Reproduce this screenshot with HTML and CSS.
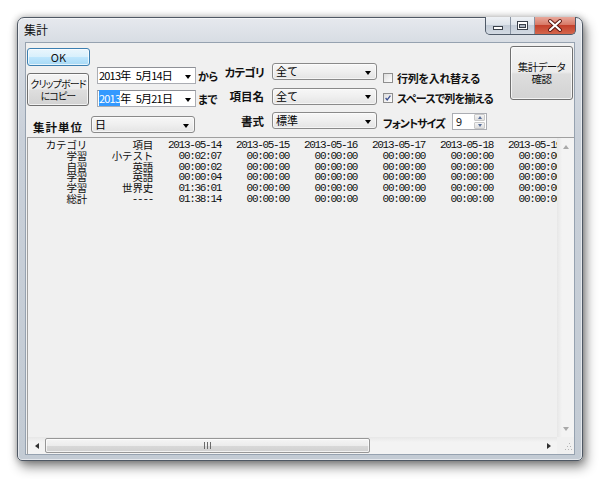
FILE: index.html
```html
<!DOCTYPE html>
<html lang="ja">
<head>
<meta charset="utf-8">
<title>集計</title>
<link rel="stylesheet" href="styles.css">
</head>
<body>
<div class="window">
  <div class="titlebar">
    <span class="title">集計</span>
    <div class="caption-btns">
      <div class="cbtn min"><svg width="24" height="17" viewBox="0 0 24 17"><rect x="7.5" y="9.5" width="9" height="3" fill="#fff" stroke="#3a414b"/></svg></div>
      <div class="cbtn max"><svg width="23" height="17" viewBox="0 0 23 17"><rect x="6.5" y="4.5" width="10" height="8" fill="#fff" stroke="#3a414b"/><rect x="8.5" y="7.5" width="6" height="3" fill="#aab3bf" stroke="#3a414b"/></svg></div>
      <div class="cbtn close"><svg width="40" height="17" viewBox="0 0 40 17"><path d="M15 4 L25 13 M25 4 L15 13" stroke="#5a1a14" stroke-width="4" stroke-linecap="round"/><path d="M15 4 L25 13 M25 4 L15 13" stroke="#fff" stroke-width="2" stroke-linecap="round"/></svg></div>
    </div>
  </div>
  <div class="client">
    <div class="controls">
      <div class="grp-left">
        <div class="grp-left-top">
          <div class="btncol">
            <div class="btn ok">OK</div>
            <div class="btn clip">クリップボード<br>にコピー</div>
          </div>
          <div class="datecol">
            <div class="daterow">
              <div class="dtp"><span class="dtp-text">2013年  5月14日</span><span class="arrow"></span></div>
              <span class="lbl after">から</span>
            </div>
            <div class="daterow">
              <div class="dtp"><span class="dtp-text"><span class="sel">2013</span>年  5月21日</span><span class="arrow"></span></div>
              <span class="lbl after">まで</span>
            </div>
          </div>
        </div>
        <div class="unitrow">
          <span class="lbl unit">集計単位</span>
          <div class="combo unit-combo"><span>日</span><span class="arrow"></span></div>
        </div>
      </div>
      <div class="fields">
        <span class="lbl kana">カテゴリ</span>
        <div class="combo"><span>全て</span><span class="arrow"></span></div>
        <span class="lbl">項目名</span>
        <div class="combo"><span>全て</span><span class="arrow"></span></div>
        <span class="lbl">書式</span>
        <div class="combo"><span>標準</span><span class="arrow"></span></div>
      </div>
      <div class="opts">
        <div class="chkrow"><span class="chk"></span><span class="lbl opt1">行列を入れ替える</span></div>
        <div class="chkrow"><span class="chk"><svg width="10" height="10" viewBox="0 0 10 10"><path d="M2 5 L4 7.5 L8 2" fill="none" stroke="#3b4f8f" stroke-width="1.6"/></svg></span><span class="lbl opt2">スペースで列を揃える</span></div>
        <div class="fontrow">
          <span class="lbl fontlbl">フォントサイズ</span>
          <div class="num"><span class="numval">9</span>
            <div class="spin">
              <div class="spinbtn"><span class="up"></span></div>
              <div class="spinbtn"><span class="down"></span></div>
            </div>
          </div>
        </div>
      </div>
      <div class="btn confirm">集計データ<br>確認</div>
    </div>
    <div class="data">
      <div class="data-main">
        <div class="grid-wrap">
          <div class="grid">
            <span class="j">カテゴリ</span><span class="j">項目</span><span>2013-05-14</span><span>2013-05-15</span><span>2013-05-16</span><span>2013-05-17</span><span>2013-05-18</span><span>2013-05-19</span>
            <span class="j">学習</span><span class="j">小テスト</span><span>00:02:07</span><span>00:00:00</span><span>00:00:00</span><span>00:00:00</span><span>00:00:00</span><span>00:00:00</span>
            <span class="j">自習</span><span class="j">英語</span><span>00:00:02</span><span>00:00:00</span><span>00:00:00</span><span>00:00:00</span><span>00:00:00</span><span>00:00:00</span>
            <span class="j">学習</span><span class="j">英語</span><span>00:00:04</span><span>00:00:00</span><span>00:00:00</span><span>00:00:00</span><span>00:00:00</span><span>00:00:00</span>
            <span class="j">学習</span><span class="j">世界史</span><span>01:36:01</span><span>00:00:00</span><span>00:00:00</span><span>00:00:00</span><span>00:00:00</span><span>00:00:00</span>
            <span class="j">総計</span><span>----</span><span>01:38:14</span><span>00:00:00</span><span>00:00:00</span><span>00:00:00</span><span>00:00:00</span><span>00:00:00</span>
          </div>
        </div>
        <div class="vscroll">
          <div class="sbtn"><span class="tri-up"></span></div>
          <div class="vtrack"></div>
          <div class="sbtn"><span class="tri-down"></span></div>
        </div>
      </div>
      <div class="hscroll">
        <div class="sbtn h"><span class="tri-left"></span></div>
        <div class="htrack">
          <div class="thumb"><svg width="7" height="7" viewBox="0 0 7 7"><path d="M0.5 0 V7 M3.5 0 V7 M6.5 0 V7" stroke="#6b6b6b" stroke-width="1"/></svg></div>
        </div>
        <div class="sbtn h"><span class="tri-right"></span></div>
        <div class="grip"><svg width="17" height="17" viewBox="0 0 17 17"><g fill="#b5b5b5"><rect x="12" y="6" width="1" height="1"/><rect x="10" y="9" width="1" height="1"/><rect x="13" y="9" width="1" height="1"/><rect x="8" y="12" width="1" height="1"/><rect x="11" y="12" width="1" height="1"/><rect x="14" y="12" width="1" height="1"/></g></svg></div>
      </div>
    </div>
  </div>
</div>
</body>
</html>
```

FILE: styles.css
```css
html, body {
  margin: 0;
  padding: 0;
}
body {
  width: 600px;
  height: 479px;
  overflow: hidden;
  background: #ffffff;
  font-family: "Noto Sans CJK JP", sans-serif;
  color: #000;
}
.window {
  margin: 17px 0 0 17px;
  width: 566px;
  height: 444px;
  box-sizing: border-box;
  border: 1px solid #4f5864;
  border-radius: 7px 7px 5px 5px;
  background: linear-gradient(to bottom, #e6e9ee 0px, #d7dce3 25px, #c9d0d9 120px, #c3cbd4 100%);
  box-shadow: 3px 6px 12px rgba(0, 0, 0, 0.45), 0 0 7px rgba(0, 0, 0, 0.3), inset 0 0 0 1px rgba(255, 255, 255, 0.55);
  display: flex;
  flex-direction: column;
  padding: 0 8px 6px 8px;
}
.titlebar {
  height: 25px;
  display: flex;
  align-items: flex-start;
  flex-shrink: 0;
}
.title {
  font-size: 12px;
  line-height: 12px;
  margin: 6px 0 0 -2px;
  color: #111;
}
.caption-btns {
  margin-left: auto;
  margin-top: -1px;
  margin-right: -2px;
  display: flex;
  height: 17px;
  border: 1px solid #4f5a68;
  border-top: none;
  border-radius: 0 0 5px 5px;
  overflow: hidden;
  background: #8893a2;
  gap: 1px;
}
.cbtn {
  height: 17px;
  display: flex;
}
.cbtn.min, .cbtn.max {
  background: linear-gradient(to bottom, #eef1f5 0%, #dde3ea 45%, #c3ccd7 50%, #d3dae3 100%);
}
.cbtn.min { width: 24px; }
.cbtn.max { width: 23px; }
.cbtn.close {
  width: 40px;
  background: linear-gradient(to bottom, #e8a89b 0%, #d87a67 45%, #c4412c 50%, #d4664c 100%);
}
.client {
  flex: 1;
  background: #f0f0f0;
  display: flex;
  flex-direction: column;
  box-shadow: 0 0 0 1px #96a2b0;
  min-height: 0;
}
.controls {
  height: 94px;
  flex-shrink: 0;
  display: flex;
  align-items: flex-start;
  font-size: 11px;
}
.btn {
  box-sizing: border-box;
  border: 1px solid #707070;
  border-radius: 3px;
  background: linear-gradient(to bottom, #f4f4f4 0%, #ececec 48%, #dedede 52%, #d2d2d2 100%);
  box-shadow: inset 0 0 0 1px rgba(255, 255, 255, 0.7);
  display: flex;
  align-items: center;
  justify-content: center;
  text-align: center;
  font-size: 11px;
  line-height: 13px;
  color: #111;
  white-space: nowrap;
}
.grp-left {
  margin-left: 1px;
  width: 195px;
  flex-shrink: 0;
}
.grp-left-top {
  display: flex;
}
.btncol {
  width: 63px;
  display: flex;
  flex-direction: column;
}
.btn.ok {
  margin-top: 5px;
  height: 18px;
  width: 63px;
  border-color: #3c7fb1;
  background: linear-gradient(to bottom, #eaf6fd 0%, #d9f0fc 48%, #bee6fd 52%, #a7d9f5 100%);
}
.btn.clip {
  margin-top: 7px;
  height: 33px;
  width: 62px;
  font-size: 10px;
  line-height: 12px;
  letter-spacing: -0.9px;
  font-feature-settings: "palt";
}
.datecol {
  margin-left: 7px;
  margin-top: 24px;
  display: flex;
  flex-direction: column;
  gap: 6px;
}
.daterow {
  display: flex;
  align-items: center;
  height: 17px;
}
.dtp {
  width: 99px;
  height: 17px;
  box-sizing: border-box;
  border: 1px solid #abadb3;
  border-top-color: #8e9096;
  background: #fff;
  display: flex;
  align-items: center;
  padding-left: 1px;
  padding-right: 4px;
}
.dtp-text {
  white-space: pre;
  font-size: 11px;
  line-height: 15px;
  letter-spacing: -0.8px;
  word-spacing: 1px;
}
.sel {
  background: #3399ff;
  color: #fff;
}
.arrow {
  margin-left: auto;
  width: 0;
  height: 0;
  border-left: 3.5px solid transparent;
  border-right: 3.5px solid transparent;
  border-top: 4px solid #000;
  margin-top: 2px;
}
.lbl {
  font-weight: bold;
  font-size: 11px;
  line-height: 14px;
  font-feature-settings: "palt";
  white-space: nowrap;
  color: #111;
}
.lbl.after {
  margin-left: 2px;
  letter-spacing: -0.5px;
}
.unitrow {
  display: flex;
  align-items: center;
  margin-top: 8px;
  width: 168px;
}
.lbl.unit {
  margin-left: 6px;
  letter-spacing: 1px;
  margin-top: 5px;
  font-size: 11.5px;
}
.combo {
  width: 105px;
  height: 17px;
  box-sizing: border-box;
  border: 1px solid #8a8a8a;
  border-radius: 3px;
  background: linear-gradient(to bottom, #f7f7f7 0%, #efefef 50%, #e4e4e4 100%);
  box-shadow: inset 0 0 0 1px rgba(255, 255, 255, 0.6);
  display: flex;
  align-items: center;
  padding: 0 5px 0 3px;
  font-size: 11px;
  line-height: 15px;
}
.combo.unit-combo {
  margin-left: auto;
  width: 104px;
}
.fields {
  margin-left: 4px;
  margin-top: 20px;
  display: grid;
  grid-template-columns: 38px 105px;
  column-gap: 8px;
  row-gap: 7.5px;
  align-items: center;
}
.fields .lbl {
  justify-self: end;
  font-size: 11.5px;
}
.fields .lbl.kana {
  letter-spacing: -0.8px;
}
.opts {
  margin-left: 6px;
  margin-top: 27px;
  display: flex;
  flex-direction: column;
}
.chkrow {
  height: 15px;
  display: flex;
  align-items: center;
  margin-bottom: 5px;
}
.lbl.opt1 {
  letter-spacing: -0.3px;
}
.lbl.opt2 {
  letter-spacing: -0.7px;
}
.chk {
  width: 10px;
  height: 10px;
  box-sizing: border-box;
  border: 1px solid #8f8f8f;
  background: linear-gradient(135deg, #dcdcdc 0%, #f2f2f2 60%, #ffffff 100%);
  margin-right: 4px;
  display: flex;
  align-items: center;
  justify-content: center;
  flex-shrink: 0;
}
.chk svg {
  display: block;
}
.fontrow {
  margin-top: 3px;
  display: flex;
  align-items: center;
  height: 17px;
}
.lbl.fontlbl {
  width: 69px;
  margin-top: 2px;
  letter-spacing: -1px;
}
.num {
  width: 35px;
  height: 17px;
  box-sizing: border-box;
  border: 1px solid #abadb3;
  background: #fff;
  display: flex;
  align-items: center;
}
.numval {
  font-size: 11px;
  line-height: 15px;
  margin-left: 3px;
  color: #222;
}
.spin {
  margin-left: auto;
  width: 11px;
  height: 15px;
  display: flex;
  flex-direction: column;
  gap: 1px;
  margin-right: 1px;
}
.spinbtn {
  flex: 1;
  background: linear-gradient(to bottom, #f4f4f4, #dedede);
  border: 1px solid #c9c9c9;
  border-radius: 1px;
  display: flex;
  align-items: center;
  justify-content: center;
}
.up {
  width: 0;
  height: 0;
  border-left: 2.5px solid transparent;
  border-right: 2.5px solid transparent;
  border-bottom: 3px solid #5a6f9a;
}
.down {
  width: 0;
  height: 0;
  border-left: 2.5px solid transparent;
  border-right: 2.5px solid transparent;
  border-top: 3px solid #5a6f9a;
}
.btn.confirm {
  margin-left: auto;
  margin-right: 1px;
  margin-top: 3px;
  width: 63px;
  height: 54px;
  font-size: 10.5px;
  line-height: 12px;
  letter-spacing: -0.6px;
  font-feature-settings: "palt";
  flex-shrink: 0;
}
.data {
  flex: 1;
  min-height: 0;
  margin-left: 1px;
  border-top: 1px solid #a0a0a0;
  border-left: 1px solid #a0a0a0;
  display: flex;
  flex-direction: column;
}
.data-main {
  flex: 1;
  min-height: 0;
  display: flex;
}
.grid-wrap {
  flex: 1;
  overflow: hidden;
  padding-top: 2px;
}
.grid {
  display: grid;
  grid-template-columns: 59px 66px repeat(6, 68px);
  grid-auto-rows: 10.8px;
  width: max-content;
  font-family: "Liberation Mono", "Noto Sans CJK JP", monospace;
  font-size: 11px;
  letter-spacing: -1.3px;
  line-height: 10.8px;
  color: #111;
}
.grid span {
  text-align: right;
  white-space: nowrap;
}
.grid .j {
  font-family: "Noto Sans CJK JP", sans-serif;
  font-size: 10.5px;
  letter-spacing: -0.2px;
}
.vscroll {
  width: 17px;
  display: flex;
  flex-direction: column;
  background: linear-gradient(to right, #e7e7e7 0%, #f3f3f3 30%, #f3f3f3 100%);
}
.sbtn {
  width: 17px;
  height: 17px;
  display: flex;
  align-items: center;
  justify-content: center;
  flex-shrink: 0;
}
.vtrack {
  flex: 1;
}
.tri-up {
  width: 0;
  height: 0;
  border-left: 3.5px solid transparent;
  border-right: 3.5px solid transparent;
  border-bottom: 4px solid #a9a9a9;
}
.tri-down {
  width: 0;
  height: 0;
  border-left: 3.5px solid transparent;
  border-right: 3.5px solid transparent;
  border-top: 4px solid #a9a9a9;
}
.tri-left {
  width: 0;
  height: 0;
  border-top: 3.5px solid transparent;
  border-bottom: 3.5px solid transparent;
  border-right: 4px solid #303030;
}
.tri-right {
  width: 0;
  height: 0;
  border-top: 3.5px solid transparent;
  border-bottom: 3.5px solid transparent;
  border-left: 4px solid #303030;
}
.hscroll {
  height: 17px;
  flex-shrink: 0;
  display: flex;
  background: linear-gradient(to bottom, #e7e7e7 0%, #f3f3f3 30%, #f3f3f3 100%);
}
.htrack {
  flex: 1;
  display: flex;
  align-items: center;
}
.thumb {
  width: 325px;
  height: 15px;
  box-sizing: border-box;
  border: 1px solid #979797;
  border-radius: 2px;
  background: linear-gradient(to bottom, #f5f5f5 0%, #ececec 50%, #d9d9d9 51%, #d0d0d0 100%);
  box-shadow: inset 0 0 0 1px rgba(255, 255, 255, 0.7);
  display: flex;
  align-items: center;
  justify-content: center;
}
.grip {
  width: 17px;
  height: 17px;
  background: #f0f0f0;
}
.grip svg, .cbtn svg, .thumb svg {
  display: block;
}
```
